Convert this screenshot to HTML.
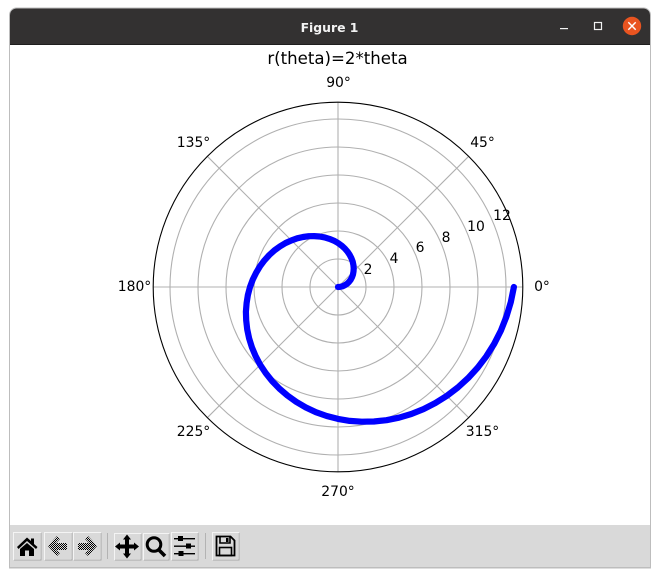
<!DOCTYPE html>
<html><head><meta charset="utf-8"><style>
html,body{margin:0;padding:0;background:#fff;width:660px;height:577px;overflow:hidden}
svg{display:block}
.t{font-family:"DejaVu Sans",sans-serif;font-size:13.9px;fill:#000;text-anchor:middle}
</style></head><body>
<svg width="660" height="577" viewBox="0 0 660 577" xmlns="http://www.w3.org/2000/svg">
<defs>
<pattern id="ck" width="2" height="2" patternUnits="userSpaceOnUse"><rect width="2" height="2" fill="#d9d9d9"/><rect width="1" height="1" fill="#000"/><rect x="1" y="1" width="1" height="1" fill="#000"/></pattern>
</defs>
<!-- window -->
<path d="M9.5 568V15a7 7 0 0 1 7-7H643.5a7 7 0 0 1 7 7V568Z" fill="#fff" stroke="#bdbdbd" stroke-width="1"/>
<path d="M10 44.5V15a6.5 6.5 0 0 1 6.5-6.5H643.5a6.5 6.5 0 0 1 6.5 6.5V44.5Z" fill="#333131"/>
<rect x="10" y="44" width="640" height="1" fill="#1f1e1e"/>
<text x="329.5" y="32" font-family="'DejaVu Sans','Liberation Sans',sans-serif" font-size="12.4" font-weight="bold" fill="#f2f2f2" text-anchor="middle">Figure 1</text>
<rect x="560" y="28" width="8" height="1.2" fill="#f2f2f2"/>
<rect x="594.5" y="22.5" width="7" height="7" fill="none" stroke="#f2f2f2" stroke-width="1.2"/>
<circle cx="632" cy="26" r="9.2" fill="#e95420"/>
<path d="M628.3 22.3L635.7 29.7M635.7 22.3L628.3 29.7" stroke="#fff" stroke-width="1.4"/>
<!-- toolbar -->
<rect x="10" y="525" width="640" height="42.5" fill="#d9d9d9"/>
<rect x="9" y="567" width="642" height="1" fill="#bdbdbd"/>
<!-- title -->
<text x="337.5" y="64" font-family="'DejaVu Sans',sans-serif" font-size="16.6" text-anchor="middle" fill="#000">r(theta)=2*theta</text>
<!-- grid -->
<g fill="none" stroke="#b0b0b0" stroke-width="1.1">
<circle cx="338" cy="287" r="28"/><circle cx="338" cy="287" r="56"/><circle cx="338" cy="287" r="84"/><circle cx="338" cy="287" r="112"/><circle cx="338" cy="287" r="140"/><circle cx="338" cy="287" r="168"/>
<path d="M153 287H523M338 102V472M207.2 156.2L468.8 417.8M207.2 417.8L468.8 156.2"/>
</g>
<circle cx="338" cy="287" r="184.8" fill="none" stroke="#000" stroke-width="1.1"/>
<!-- spiral -->
<polyline fill="none" stroke="#0000ff" stroke-width="6.2" stroke-linecap="round" stroke-linejoin="round" points="338,287 340.4,286.8 342.8,286.2 345.1,285.1 347.2,283.7 349.1,281.8 350.7,279.7 352,277.2 353,274.4 353.5,271.5 353.7,268.3 353.4,265 352.7,261.6 351.4,258.2 349.7,254.9 347.5,251.6 344.8,248.5 341.6,245.6 338,243 334,240.7 329.5,238.9 324.7,237.4 319.6,236.5 314.2,236.1 308.7,236.2 303,237 297.2,238.3 291.4,240.4 285.6,243 280,246.4 274.5,250.3 269.3,255 264.5,260.3 260.1,266.1 256.2,272.6 252.8,279.5 250,287 247.9,294.9 246.6,303.1 245.9,311.7 246.2,320.4 247.2,329.3 249.1,338.3 251.9,347.3 255.6,356.1 260.2,364.8 265.7,373.1 272.1,381.1 279.4,388.6 287.4,395.5 296.2,401.8 305.8,407.4 315.9,412.2 326.7,416 338,418.9 349.7,420.9 361.8,421.7 374,421.5 386.5,420.2 398.9,417.7 411.3,414 423.5,409.1 435.4,403 446.8,395.9 457.8,387.5 468.1,378.1 477.7,367.6 486.4,356.2 494.2,343.8 500.9,330.6 506.4,316.7 510.8,302.1 513.9,287"/>
<!-- labels -->
<g class="t">
<text class="t" x="368" y="274">2</text>
<text class="t" x="394" y="263">4</text>
<text class="t" x="420" y="252">6</text>
<text class="t" x="446" y="242">8</text>
<text class="t" x="476" y="231">10</text>
<text class="t" x="502" y="220">12</text>
<text class="t" x="542" y="291">0°</text>
<text class="t" x="482.5" y="147">45°</text>
<text class="t" x="338.5" y="87">90°</text>
<text class="t" x="193.5" y="147">135°</text>
<text class="t" x="134.5" y="291">180°</text>
<text class="t" x="193.5" y="436">225°</text>
<text class="t" x="338" y="496">270°</text>
<text class="t" x="482.5" y="436">315°</text>
</g>
<!-- buttons -->
<g fill="#d9d9d9" stroke="#f4f4f4" stroke-width="1">
<rect x="13.5" y="532.5" width="27" height="27"/><rect x="44.5" y="532.5" width="27" height="27"/><rect x="73.5" y="532.5" width="27" height="27"/>
<rect x="114.5" y="533.5" width="26" height="26"/><rect x="143.5" y="533.5" width="25" height="26"/><rect x="171.5" y="532.5" width="26" height="27"/><rect x="212.5" y="532.5" width="26" height="27"/>
</g>
<g fill="none" stroke="#a8a8a8" stroke-width="1">
<path d="M41 533V560H14M72 533V560H45M101 533V560H74M141 534V560H115M169 534V560H144M198 533V560H172M239 533V560H213"/>
</g>
<rect x="107" y="533" width="1" height="26" fill="#b3b3b3"/>
<rect x="205" y="533" width="1" height="26" fill="#b3b3b3"/>
<!-- home -->
<path d="M17 547L27 537.5L31 541V538.5H34V544L37.5 547L36 549L27 541L18.5 549Z" fill="#000"/>
<path d="M20 549L27 543L34 549V556H29V550.5H25V556H20Z" fill="#000"/>
<!-- back -->
<path d="M48 546L57 536L60 539L56 543H67V550H56L60 553L57 556Z" fill="url(#ck)"/>
<!-- forward -->
<path d="M97 546L88 536L85 539L89 543H78V550H89L85 553L88 556Z" fill="url(#ck)"/>
<!-- move -->
<path d="M127 534.5L131 539.5H129V544.5H134V542.5L139 546.5L134 550.5V548.5H129V553.5H131L127 558.5L123 553.5H125V548.5H120V550.5L115 546.5L120 542.5V544.5H125V539.5H123Z" fill="#000"/>
<!-- zoom -->
<circle cx="154" cy="544.5" r="6.8" fill="none" stroke="#000" stroke-width="3"/>
<path d="M158.5 549.5L165 556" stroke="#000" stroke-width="3.6" fill="none"/>
<!-- config -->
<g fill="#000">
<rect x="174" y="538" width="21" height="1.4"/><rect x="178" y="536" width="5" height="5"/>
<rect x="174" y="545.5" width="21" height="1.4"/><rect x="186" y="543.5" width="5" height="5"/>
<rect x="174" y="553" width="21" height="1.4"/><rect x="178.5" y="551" width="5" height="5"/>
</g>
<!-- save -->
<path d="M216.5 536.5H230.5L234.5 540.5V555.5H216.5Z" fill="none" stroke="#000" stroke-width="1.8"/>
<path d="M220 537V543H230V537" fill="none" stroke="#000" stroke-width="1.6"/>
<rect x="226" y="538" width="2.5" height="4" fill="#000"/>
<rect x="219.5" y="547.5" width="12" height="8" fill="none" stroke="#000" stroke-width="1.6"/>
</svg>
</body></html>
